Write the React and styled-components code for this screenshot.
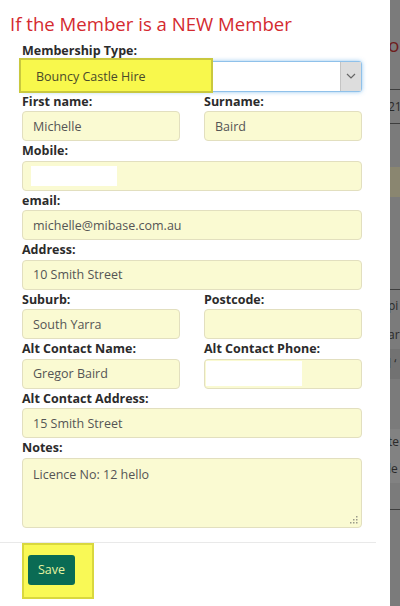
import React from 'react';
import styled, { createGlobalStyle } from 'styled-components';

const GlobalStyle = createGlobalStyle`
  html, body {
    margin: 0;
    padding: 0;
    background: #ffffff;
  }
  body {
    font-family: "Open Sans", "Noto Sans", Arial, sans-serif;
  }
`

const Page = styled.div`
  display: flex;
  width: 400px;
  height: 606px;
  overflow: hidden;
`

const Panel = styled.div`
  width: 390px;
  flex-shrink: 0;
  background: #ffffff;
`

const Title = styled.h3`
  margin: 0;
  padding: 10px 0 0 10px;
  height: 31px;
  line-height: 28px;
  font-size: 18.6px;
  font-weight: 400;
  color: #d42a2f;
`

const Form = styled.div`
  width: 340px;
  margin-left: 22px;
  display: grid;
  grid-template-columns: 158px 158px;
  column-gap: 24px;
`

const Field = styled.div`
  grid-column: ${p => (p.$wide ? '1 / span 2' : 'auto')};
  display: flex;
  flex-direction: column;
`

const Label = styled.label`
  height: 19.5px;
  line-height: 19.5px;
  font-size: 12.5px;
  font-weight: 700;
  color: #2b2b2b;
`

const Input = styled.div`
  position: relative;
  box-sizing: border-box;
  height: ${p => p.$height || 30}px;
  display: flex;
  align-items: ${p => (p.$multi ? 'flex-start' : 'center')};
  padding: ${p => (p.$multi ? '7px 10px' : '0 10px')};
  background: #fafad2;
  border: 1px solid #e2dfbf;
  border-radius: 4px;
  font-size: 12.5px;
  color: #555555;
`

const Blank = styled.span`
  display: block;
  width: ${p => p.$w}px;
  height: ${p => p.$h}px;
  margin-left: ${p => p.$ml}px;
  background: #ffffff;
`

const SelectBox = styled.div`
  position: relative;
  box-sizing: border-box;
  height: 31px;
  display: flex;
  align-items: center;
  background: #ffffff;
  border: 1px solid #8fc1ea;
  border-radius: 3px;
  box-shadow: 0 0 4px rgba(102, 175, 233, 0.7);
  font-size: 12.5px;
  color: #4a4a2a;
`

const Highlight = styled.span`
  position: absolute;
  left: ${p => p.$left}px;
  top: ${p => p.$top}px;
  width: ${p => p.$w}px;
  height: ${p => p.$h}px;
  background: #f8f84c;
  border: 2px solid #c9c83e;
  box-sizing: border-box;
`

const SelectText = styled.span`
  position: relative;
  padding-left: 13px;
  flex: 1;
`

const Chevron = styled.span`
  width: 20px;
  height: 29px;
  display: flex;
  align-items: center;
  justify-content: center;
  background: #dddddd;
  border-left: 1px solid #c4c4c4;
`

const Grip = styled.svg`
  position: absolute;
  right: 2px;
  bottom: 2px;
`

const Divider = styled.div`
  width: 376px;
  height: 1px;
  margin-top: 14px;
  background: #e9e9e9;
`

const Footer = styled.div`
  margin-left: 22px;
  width: 72px;
  height: 56px;
  box-sizing: border-box;
  padding: 10px 0 0 4px;
  background: #f9f956;
  border: 2px solid #d9d83e;
`

const SaveButton = styled.button`
  width: 47px;
  height: 30px;
  padding: 0;
  border: none;
  border-radius: 3px;
  background: #0a6b54;
  color: #e6f3a0;
  font-family: inherit;
  font-size: 12.5px;
`

const Backdrop = styled.div`
  flex: 1;
  background: #7b7b7b;
  display: flex;
  flex-direction: column;
  overflow: hidden;
`

const Strip = styled.div`
  height: ${p => p.$h}px;
  flex-shrink: 0;
  background: ${p => p.$bg || 'transparent'};
  border-bottom: ${p => (p.$line ? `1px solid ${p.$line}` : 'none')};
  color: ${p => p.$color || '#2a2a2a'};
  font-size: ${p => p.$size || 12}px;
  line-height: ${p => p.$h}px;
  white-space: nowrap;
  margin-left: -2px;
`

const strips = [
  { h: 30 },
  { h: 30, text: 'or', color: '#6e1e1e', size: 19 },
  { h: 29, line: '#3e3e3e' },
  { h: 33, text: '21', line: '#3e3e3e' },
  { h: 43 },
  { h: 30, bg: '#8a8670' },
  { h: 92, line: '#3e3e3e' },
  { h: 31, text: 'pi' },
  { h: 28, text: 'ar' },
  { h: 30, text: 'l \u2018', bg: '#727272' },
  { h: 50 },
  { h: 26, text: 'te', bg: '#828282' },
  { h: 28, text: 'le', bg: '#828282' },
  { h: 26, line: '#3e3e3e' },
  { h: 120 },
]

function Chev() {
  return (
    <svg width="10" height="6" viewBox="0 0 10 6">
      <path d="M1 1l4 4 4-4" fill="none" stroke="#666" strokeWidth="1.2" />
    </svg>
  )
}

function ResizeGrip() {
  const dots = [[8, 2], [5, 5], [8, 5], [2, 8], [5, 8], [8, 8]]
  return (
    <Grip width="10" height="10" viewBox="0 0 10 10">
      {dots.map(([x, y]) => (
        <rect key={`${x}-${y}`} x={x - 1} y={y - 1} width="1.5" height="1.5" fill="#9a9a8a" />
      ))}
    </Grip>
  )
}

export default function App() {
  return (
    <Page>
      <GlobalStyle />
      <Panel>
        <Title>If the Member is a NEW Member</Title>
        <Form>
          <Field $wide>
            <Label>Membership Type:</Label>
            <SelectBox>
              <Highlight $left={-4} $top={-4} $w={194} $h={35} />
              <SelectText>Bouncy Castle Hire</SelectText>
              <Chevron><Chev /></Chevron>
            </SelectBox>
          </Field>
          <Field>
            <Label>First name:</Label>
            <Input>Michelle</Input>
          </Field>
          <Field>
            <Label>Surname:</Label>
            <Input>Baird</Input>
          </Field>
          <Field $wide>
            <Label>Mobile:</Label>
            <Input><Blank $w={86} $h={20} $ml={-2} /></Input>
          </Field>
          <Field $wide>
            <Label>email:</Label>
            <Input>michelle@mibase.com.au</Input>
          </Field>
          <Field $wide>
            <Label>Address:</Label>
            <Input>10 Smith Street</Input>
          </Field>
          <Field>
            <Label>Suburb:</Label>
            <Input>South Yarra</Input>
          </Field>
          <Field>
            <Label>Postcode:</Label>
            <Input />
          </Field>
          <Field>
            <Label>Alt Contact Name:</Label>
            <Input>Gregor Baird</Input>
          </Field>
          <Field>
            <Label>Alt Contact Phone:</Label>
            <Input><Blank $w={96} $h={25} $ml={-9} /></Input>
          </Field>
          <Field $wide>
            <Label>Alt Contact Address:</Label>
            <Input>15 Smith Street</Input>
          </Field>
          <Field $wide>
            <Label>Notes:</Label>
            <Input $multi $height={70}>
              Licence No: 12 hello
              <ResizeGrip />
            </Input>
          </Field>
        </Form>
        <Divider />
        <Footer>
          <SaveButton>Save</SaveButton>
        </Footer>
      </Panel>
      <Backdrop>
        {strips.map((s, i) => (
          <Strip key={i} $h={s.h} $bg={s.bg} $line={s.line} $color={s.color} $size={s.size}>
            {s.text}
          </Strip>
        ))}
      </Backdrop>
    </Page>
  )
}
